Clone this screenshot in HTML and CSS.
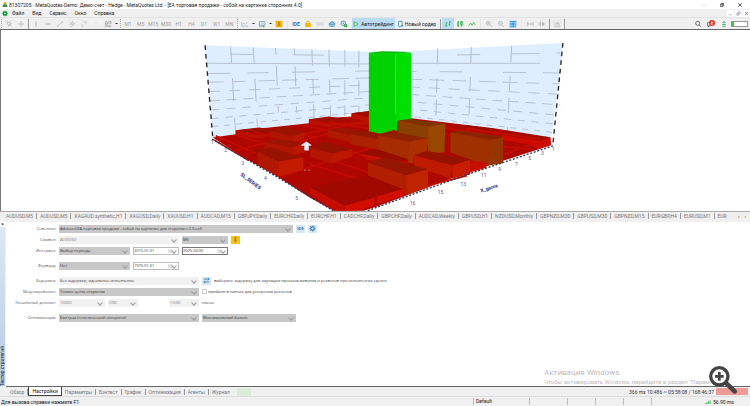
FILE: index.html
```html
<!DOCTYPE html>
<html lang="ru">
<head>
  <meta charset="UTF-8">
  <meta name="viewport" content="width=device-width, initial-scale=1.0">
  <title>MetaTrader</title>
  <link rel="stylesheet" href="styles.css">
</head>
<body>
  <div class="title_bar">
    <svg class="logo" viewBox="0 0 14 14"><circle cx="7" cy="4" r="3.5" fill="#e0b030"/><path d="M1 13c0-5 3-7 6-7s6 2 6 7z" fill="#3f8f4a"/><path d="M7 7l5 5H7z" fill="#3a7ac0"/></svg>
    <span class="title">81307205 - MetaQuotes-Demo: Демо-счет - Hedge - MetaQuotes Ltd. - [ЕА торговая продажи - собой на картинке сторонних 4.0]</span>
    <div class="window_btns">
      <button aria-label="Свернуть"><svg viewBox="0 0 12 12"><path d="M1 6h10" stroke="#aaa"/></svg></button>
      <button aria-label="Развернуть"><svg viewBox="0 0 12 12"><path d="M1 4h7v7H1zM4 3V1h7v7H9" fill="none" stroke="#111" stroke-width="2"/></svg></button>
      <button aria-label="Закрыть"><svg viewBox="0 0 12 12"><path d="M1 1l10 10M11 1L1 11" stroke="#111" stroke-width="2"/></svg></button>
    </div>
  </div>

  <nav class="menu">
    <svg class="logo" viewBox="0 0 18 18"><path d="M9 0l2 3 4-1 0 4 3 3-3 3 0 4-4-1-2 3-2-3-4 1 0-4-3-3 3-3 0-4 4 1z" fill="#0b9a3a"/><circle cx="9" cy="9" r="2.5" fill="#fff"/></svg>
    <a href="#">Файл</a>
    <a href="#">Вид</a>
    <a href="#">Сервис</a>
    <a href="#">Окно</a>
    <a href="#">Справка</a>
    <div class="child_btns">
      <button aria-label="Свернуть окно"><svg viewBox="0 0 12 12"><path d="M3 9h6" stroke="#667"/></svg></button>
      <button aria-label="Восстановить окно"><svg viewBox="0 0 12 12"><path d="M2 5h5v5H2zM5 4V2h5v5H8" fill="none" stroke="#557"/></svg></button>
      <button aria-label="Закрыть окно"><svg viewBox="0 0 12 12"><path d="M3 3l6 6M9 3L3 9" stroke="#557" stroke-width="2"/></svg></button>
    </div>
  </nav>

  <div class="toolbar">
    <i class="grip"></i>
    <button aria-label="Курсор"><svg viewBox="0 0 24 24"><path d="M5 4l6 15 2-6 6-2zM13 12l6 7M15 4h4" fill="none" stroke="#aaa" stroke-width="2"/></svg></button>
    <button aria-label="Перекрестие"><svg viewBox="0 0 24 24"><path d="M12 3v18M3 12h18" stroke="#aaa" stroke-width="2"/></svg></button>
    <i class="sep"></i>
    <button aria-label="Вертикальная линия"><svg viewBox="0 0 24 24"><path d="M12 3v18M9 12h6" stroke="#aaa" stroke-width="2"/></svg></button>
    <button aria-label="Горизонтальная линия"><svg viewBox="0 0 24 24"><path d="M3 12h18M12 9v6" stroke="#aaa" stroke-width="2"/></svg></button>
    <button aria-label="Трендовая линия"><svg viewBox="0 0 24 24"><path d="M4 20L20 4M3 18h4M17 6h4" stroke="#aaa" stroke-width="2"/></svg></button>
    <button aria-label="Канал"><svg viewBox="0 0 24 24"><path d="M3 16L16 3M9 21L21 8M7 10l9 7M11 7l8 6" stroke="#aaa" stroke-width="2"/></svg></button>
    <button aria-label="Фибоначчи"><svg viewBox="0 0 24 24"><path d="M10 6h10M4 18h8M4 12l3 4M18 6v5" stroke="#b8b8b8" stroke-width="2"/></svg></button>
    <button aria-label="Текст"><svg viewBox="0 0 24 24"><path d="M8 7h8M12 7v10" stroke="#e0e0e0" stroke-width="2"/></svg></button>
    <button aria-label="Объекты"><svg viewBox="0 0 24 24"><path d="M3 11l4-8 4 8zM14 4h7v6h-7zM4 14h6v6H4zM14 20l3-6 4 6z" fill="none" stroke="#999" stroke-width="2"/></svg></button>
    <i class="drop"></i>
    <i class="grip"></i>
    <div class="periods">
      <button>M1</button><button>M5</button><button>M15</button><button>M30</button><button>H1</button><button>H4</button><button>D1</button><button>W1</button><button>MN</button>
    </div>
    <i class="grip"></i>
    <button aria-label="Тип графика"><svg viewBox="0 0 24 24"><path d="M2 6v13h20M3 14l5-5 5 4 7-5" fill="none" stroke="#9db3c4" stroke-width="2"/></svg></button>
    <i class="drop"></i>
    <button aria-label="Шаблоны"><svg viewBox="0 0 24 24"><path d="M4 5h17v10H4zM4 15v4h10M8 9h9" fill="#fff" stroke="#5a88a8" stroke-width="2"/><path d="M17 16v6M14 19h6" stroke="#1cab3c" stroke-width="2"/></svg></button>
    <i class="drop"></i>
    <button aria-label="Символ"><svg viewBox="0 0 24 24"><rect x="2" y="2" width="20" height="20" rx="2" fill="#f2b705"/><path d="M15 8c-5-3-8 3-3 4s2 7-4 4M12 5v14" fill="none" stroke="#a87400" stroke-width="2"/></svg></button>
    <i class="sep light"></i>
    <button class="ide">IDE</button>
    <button aria-label="Маркет"><svg viewBox="0 0 24 24"><path d="M8 9V6c0-4 8-4 8 0v3" fill="none" stroke="#d9a000" stroke-width="2"/><path d="M4 9h16l1 12H3z" fill="#f5b800"/></svg></button>
    <button aria-label="Сигналы"><svg viewBox="0 0 24 24"><path d="M5 6l14 12M19 6L5 18M3 8v8M21 8v8" stroke="#bbb" stroke-width="2"/></svg></button>
    <button aria-label="Облако"><svg viewBox="0 0 24 24"><path d="M5 15c-4-1-2-6 2-5 1-7 10-6 10-1 5 0 5 6 1 6zM4 19h16" fill="#8cc6ec" stroke="#1676b4" stroke-width="2"/></svg></button>
    <button aria-label="VPS"><svg viewBox="0 0 24 24"><circle cx="10" cy="10" r="7" fill="none" stroke="#3b85b5" stroke-width="2"/><path d="M3 10h14M10 3v14M6 4l9 12" stroke="#3b85b5"/><circle cx="17" cy="17" r="5" fill="#19a83b"/><path d="M15 17h4M17 15v4" stroke="#fff"/></svg></button>
    <div class="trade_btns">
      <button class="checked"><svg viewBox="0 0 18 18"><path d="M3 3l10 6-10 6z" fill="#fff" stroke="#10a934" stroke-width="2"/></svg>Автотрейдинг</button>
      <button><svg viewBox="0 0 18 18"><path d="M4 2h9v8M4 2v12c0 3 5 3 8 0" fill="#fff" stroke="#2c7cba" stroke-width="2"/><path d="M13 10v6M10 13h6" stroke="#1676b4" stroke-width="2"/></svg>Новый ордер</button>
    </div>
    <i class="sep"></i>
    <button class="checked" aria-label="Бары"><svg viewBox="0 0 24 24"><path d="M7 6v15M3 17h4M7 9h3M17 3v14M13 13h4M17 6h4" stroke="#18ab42" stroke-width="2"/></svg></button>
    <button aria-label="Свечи"><svg viewBox="0 0 24 24"><path d="M8 3v18M5 6h5M5 6v12h5M17 3v18M14 5h6v10h-6z" fill="none" stroke="#18ab42" stroke-width="2"/></svg></button>
    <button aria-label="Линия"><svg viewBox="0 0 24 24"><path d="M2 17l6-8 4 7 5-9 5 8" fill="none" stroke="#18ab42" stroke-width="2"/></svg></button>
    <i class="sep light"></i>
    <button aria-label="Приблизить"><svg viewBox="0 0 24 24"><circle cx="10" cy="10" r="6" fill="none" stroke="#aaa" stroke-width="2"/><path d="M15 15l6 6M7 10h6M10 7v6" stroke="#aaa" stroke-width="2"/></svg></button>
    <button aria-label="Отдалить"><svg viewBox="0 0 24 24"><circle cx="10" cy="10" r="6" fill="none" stroke="#aaa" stroke-width="2"/><path d="M15 15l6 6M7 10h6" stroke="#aaa" stroke-width="2"/></svg></button>
    <button aria-label="Плитка"><svg viewBox="0 0 24 24"><rect x="2" y="3" width="20" height="18" fill="#8bc8f0"/><path d="M2 4h20M2 12h20M12 4v17M2 21h20" stroke="#2483c4" stroke-width="2"/></svg></button>
    <i class="sep light"></i>
    <button aria-label="Сдвиг"><svg viewBox="0 0 24 24"><path d="M4 5v14M8 8v8M13 12h6M16 9l-3 3 3 3M21 5v14" fill="none" stroke="#aaa" stroke-width="2"/></svg></button>
    <button aria-label="Автопрокрутка"><svg viewBox="0 0 24 24"><path d="M4 8v8M8 5v14M13 8h3v8h-3zM16 12h6" fill="#aaa" stroke="#aaa" stroke-width="2"/></svg></button>
    <i class="sep"></i>
    <button aria-label="Снимок"><svg viewBox="0 0 24 24"><path d="M3 3h19v18H3z" fill="none" stroke="#aaa" stroke-dasharray="3 2"/><path d="M6 11h13v9H6zM10 11V8h6v3" fill="none" stroke="#bbb" stroke-width="2"/><circle cx="13" cy="15" r="2" fill="#bbb"/></svg></button>
    <i class="sep"></i>
    <div class="tool_right">
      <button aria-label="Поиск"><svg viewBox="0 0 24 24"><circle cx="11" cy="10" r="6" fill="none" stroke="#333" stroke-width="2"/><path d="M16 15l4 5" stroke="#333" stroke-width="2"/></svg></button>
      <button aria-label="Уведомления"><svg viewBox="0 0 24 24"><path d="M2 8h10v9H7l-3 4v-4H2z" fill="#fff" stroke="#333" stroke-width="2"/><circle cx="15" cy="9" r="9" fill="#e2301e"/><path d="M12 6h5v3h-5v4h6" fill="none" stroke="#fff" stroke-width="2"/></svg></button>
      <button aria-label="Соединение"><svg viewBox="0 0 24 24"><path d="M7 9l5-5 5 5M12 5v6M6 14h12M9 16l3-3 3 3M7 20h10" fill="none" stroke="#18ab42" stroke-width="2"/></svg></button>
      <div class="level"><i></i></div>
    </div>
  </div>

  <!-- 3D график -->
  <div class="chart">
    <svg viewBox="0 90 2250 543" role="img" aria-label="3D график оптимизации">
      <!-- стены -->
      <path d="M613 136L1110 155 1232 153 1688 129 1653 420 1232 360 1053 340 945 372 637 413z" fill="#dfeeff"/>
      <g fill="none" stroke="#b9c2cd" stroke-width="3">
        <path d="M618 190L1105 192 1232 190 1620 190"/>
        <path d="M620 162L1105 167 1232 168 1680 159" stroke-dasharray="0 68 70 120 92 400 70 92 86 50 80"/>
        <path d="M620 221L1105 213 1680 219" stroke-dasharray="70 50 64 70 70 120"/>
        <path d="M623 247L1105 234 1680 252" stroke-dasharray="46 25 40 40 50 20"/>
        <path d="M625 275L1105 255 1680 283" stroke-dasharray="34 26"/>
        <path d="M628 303L1105 275 1680 315" stroke-dasharray="30 20"/>
        <path d="M630 330L1105 294 1675 346" stroke-dasharray="26 22"/>
        <path d="M632 356L1105 315 1670 373" stroke-dasharray="22 20"/>
        <path d="M635 380L1105 335 1660 398" stroke-dasharray="18 18"/>
      </g>
      <g fill="none" stroke="#b4bdc8" stroke-width="3">
        <path d="M690 140L704 390M758 142L770 380" stroke-dasharray="50 44 70 50"/>
        <path d="M825 144L835 376M881 145L890 372" stroke-dasharray="20 34 60 60"/>
        <path d="M934 147L941 364M985 149L990 358M1033 150v200M1075 152v190" stroke-dasharray="50 40 46 30"/>
        <path d="M1312 145L1306 368M1413 141L1405 380M1534 138L1521 396" stroke-dasharray="48 42 44 20"/>
      </g>
      <path d="M613 136L636 413M1688 129L1658 432" fill="none" stroke="#222" stroke-width="4" stroke-dasharray="14 12"/>

      <!-- пол -->
      <path d="M636 413L705 403 705 391 800 384 925 370 925 358 1053 350 1053 340 1110 333 1232 355 1480 385 1650 412 1652 436 1395 520 1130 620 1090 633 1000 633 930 595 830 530 750 485z" fill="#ae0700"/>
      <g fill="#9d0d00">
        <path d="M705 391l70-8 60 9-60 14zM925 358l60-8 60 9-60 12zM1053 340l55-7 60 9-50 9z"/>
        <path d="M1232 358l90 12-30 10-70-10zM1400 376l90 12-20 8-90-10zM1520 396l128 16-26 10-120-17z"/>
        <path d="M750 452l60-14 80 30-70 20z"/>
      </g>
      <g fill="none" stroke="#c40b00" stroke-width="5">
        <path d="M640 420l105 62M645 408l120 52M705 405l110 32M760 396l100 26M830 390l120 24M905 376l180 34M985 366l120 20"/>
        <path d="M705 452l140-36 240-48M770 462l230-66M840 530l120-38 230-72M925 492l170 52M985 480l140 44M1040 452l170 48M1110 400l180 70"/>
        <path d="M1240 386l130 24M1310 380l190 30M1395 385l190 28M1470 396l150 22M1390 500l120-36 110-40M1490 440l110 8M1350 405l70-20M1270 560l130-32"/>
      </g>
      <path d="M705 391l70 14 55-10v8l-55 14-70-12zM925 358l60 12 120-6v9l-120 8-60-8zM1053 340l60 14v14l-60-12z" fill="#bb0f00"/>
      <path d="M1502 405l120 18 28-11 2 22-40 14-20-14-90-14z" fill="#cf0b00"/>

      <!-- задние столбцы -->
      <path d="M810 393l37-13 65 18-39 12z" fill="#9b1400"/>
      <path d="M810 393l63 17v18l-63-16z" fill="#b01500"/><path d="M873 410l39-12v22l-39 8z" fill="#b81700"/>
      <path d="M792 427l38-10 80 13-35 13z" fill="#9b1400"/>
      <path d="M792 427l83 16v24l-83-18z" fill="#b01500"/><path d="M875 443l35-13v28l-35 9z" fill="#b81700"/>
      <path d="M980 390l50-8 60 14-45 12z" fill="#9b1400"/>
      <path d="M980 390l70 16v22l-70-18z" fill="#b01800"/>
      <path d="M1050 403l40-10 60 14-17 11z" fill="#8f1a00"/>
      <path d="M1050 403l83 15v32l-83-17z" fill="#ac2200"/>

      <!-- зелёный столбец -->
      <path d="M1105 158l40-4 87 2-47 6z" fill="#00b800"/>
      <path d="M1105 158l80 2v230l-45 12-35-8z" fill="#00d200"/>
      <path d="M1185 158h47v202l-42 6v26l-5 2z" fill="#00e000"/>

      <!-- столбцы правой стороны -->
      <path d="M1192 362l33-5 108 15-50 8z" fill="#7c3500"/>
      <path d="M1192 362l91 18v60l-91-36z" fill="#8a4000"/><path d="M1283 380l52-9-3 86-49 5z" fill="#974700"/>
      <path d="M1350 398l25-6 133 18-38 10z" fill="#862500"/>
      <path d="M1350 398l120 22-10 77-110-39z" fill="#a03000"/><path d="M1470 420l38-8v78l-48 8z" fill="#973500"/>
      <path d="M1133 406l47-10 100 19-52 11z" fill="#8c2200"/>
      <path d="M1133 406l95 20v57l-95-35z" fill="#a52b00"/><path d="M1228 426l52-11v43l-40 8-2 24-16-2z" fill="#ab3000"/>

      <!-- передние столбцы -->
      <path d="M1072 460l50-12 105 30-60 6z" fill="#960d00"/><path d="M1072 460l150 28v10l-120-18z" fill="#c21000"/>
      <path d="M930 443l40-17 85 22-62 13z" fill="#951200"/>
      <path d="M930 443l63 18v30l-63-20z" fill="#b41500"/><path d="M993 461l62-13v22l-62 21z" fill="#bd1700"/>
      <path d="M1240 466l40-13 130 25-54 18z" fill="#951100"/>
      <path d="M1240 466l116 30-6 40-110-38z" fill="#bd1a00"/><path d="M1356 496l54-16v43l-54 13z" fill="#c61d00"/>
      <path d="M1410 484l48 2v18l-48 14z" fill="#c80e00"/>
      <path d="M772 455l38-13 98 31-75 12z" fill="#971200"/>
      <path d="M772 455l61 30v45l-61-35z" fill="#b21700"/><path d="M833 485l75-12v37l-75 20z" fill="#c41b00"/>
      <path d="M1102 488l53-15 128 35-66 18z" fill="#951500"/>
      <path d="M1102 488l115 38v60l-115-53z" fill="#b21f00"/><path d="M1217 526l66-18v55l-66 23z" fill="#bf2300"/>
      <path d="M928 563l172-37 108 42-78 22-98 28z" fill="#a00900"/>
      <path d="M928 563l104 55v15h-30l-74-50z" fill="#c50c00"/><path d="M1032 618l91-25v25l-60 15h-31zM1130 590l78-22v20l-78 25z" fill="#d20e00"/>
      <path d="M902 436l16-10 14 10-8 2v13h-12v-13zM910 511h5M923 511h5" fill="#e6eefc" stroke="#cfd9ea" stroke-width="2"/>

      <!-- оси -->
      <path d="M634 418L830 532 998 633M1658 438L1395 526 1100 633" fill="none" stroke="#335" stroke-width="4" stroke-dasharray="6 5"/>
      <g class="axis_text">
        <text x="630" y="432">1</text><text x="671" y="458">2</text><text x="722" y="495">3</text><text x="790" y="540">4</text><text x="884" y="600">5</text>
        <text x="1655" y="455">1</text><text x="1622" y="466">3</text><text x="1584" y="482">5</text><text x="1544" y="498">7</text><text x="1494" y="515">9</text><text x="1442" y="533">11</text><text x="1380" y="560">13</text><text x="1312" y="584">15</text><text x="1228" y="616">16</text>
        <text class="axis_name" transform="translate(718 526) rotate(37)">SL_SERIES</text>
        <text class="axis_name" transform="translate(1442 578) rotate(-18)">X_gama</text>
      </g>
    </svg>
  </div>

  <nav class="chart_tabs">
    <div class="tab_list">
      <a href="#">AUDUSD,M5</a><a href="#">AUDUSD,M5</a><a href="#">XAGAUD.synthetic,H1</a><a href="#">XAGUSD,Daily</a><a href="#">XAUUSD,H1</a><a href="#">AUDCAD,M15</a><a href="#">GBPJPY,Daily</a><a href="#">EURCHF,Daily</a><a href="#">EURCHF,H1</a><a href="#">CADCHF,Daily</a><a href="#">GBPCHF,Daily</a><a href="#">AUDCAD,Weekly</a><a href="#">GBPUSD,H1</a><a href="#">NZDUSD,Monthly</a><a href="#">GBPNZD,M30</a><a href="#">GBPUSD,M30</a><a href="#">GBPNZD,M15</a><a href="#">EURGBP,H4</a><a href="#">EURUSD,M1</a><a href="#">EUR</a>
    </div>
    <div class="scroll_btns"><button aria-label="Назад">‹</button><button aria-label="Вперёд">›</button></div>
  </nav>

  <!-- Тестер стратегий -->
  <div class="tester">
    <div class="side">
      <button aria-label="Закрыть тестер">×</button>
      <span>Тестер стратегий</span>
    </div>
    <form class="settings">
      <label for="expert">Советник:</label>
      <div class="row">
        <span class="select w_expert"><select id="expert"><option>Advisors\ЕА торговля продажи - собой на картинке для стороны v 2.0.ex5</option></select></span>
        <button type="button" class="small_btn ide">IDE</button>
        <button type="button" class="small_btn" aria-label="Параметры советника"><svg viewBox="0 0 24 24"><circle cx="12" cy="12" r="6" fill="none" stroke="#2b7db5" stroke-width="4"/><path d="M12 2v4M12 18v4M2 12h4M18 12h4M5 5l3 3M16 16l3 3M19 5l-3 3M8 16l-3 3" stroke="#2b7db5" stroke-width="3"/></svg></button>
      </div>

      <label for="symbol">Символ:</label>
      <div class="row">
        <span class="select light w_symbol"><select id="symbol"><option>AUDUSD</option></select></span>
        <span class="select w_date"><select aria-label="Период"><option>M5</option></select></span>
        <button type="button" class="small_btn gold" aria-label="Спецификация"><svg viewBox="0 0 24 24"><path d="M16 7c-6-4-10 3-4 5s2 8-5 4M12 3v18" fill="none" stroke="#8a6200" stroke-width="2"/></svg></button>
      </div>

      <label for="interval">Интервал:</label>
      <div class="row">
        <span class="select w_interval"><select id="interval"><option>Выбор периода</option></select></span>
        <span class="date w_date"><input type="text" value="2015.01.01" aria-label="Дата начала"><svg viewBox="0 0 15 12"><path d="M1 2h12v9H1zM1 5h12M5 5v6M9 5v6" fill="none" stroke="#aaa"/></svg></span>
        <span class="date active w_date"><input type="text" value="2025.04.05" aria-label="Дата конца"><svg viewBox="0 0 15 12"><path d="M1 2h12v9H1zM1 5h12M5 5v6M9 5v6" fill="none" stroke="#aaa"/></svg></span>
      </div>

      <label class="group" for="forward">Форвард:</label>
      <div class="row group">
        <span class="select w_interval"><select id="forward"><option>Нет</option></select></span>
        <span class="date w_date"><input type="text" value="1970.01.01" aria-label="Дата форварда"><svg viewBox="0 0 15 12"><path d="M1 2h12v9H1zM1 5h12M5 5v6M9 5v6" fill="none" stroke="#aaa"/></svg></span>
      </div>

      <label class="group" for="delay">Задержки:</label>
      <div class="row group">
        <span class="select light dark_text w_full"><select id="delay"><option>Без задержки, идеальное исполнение</option></select></span>
        <button type="button" class="small_btn" aria-label="Настройка задержки"><svg viewBox="0 0 24 24"><path d="M3 7h18M17 3l4 4-4 4M21 17H3M7 13l-4 4 4 4" fill="none" stroke="#2b7db5" stroke-width="3"/></svg></button>
        <span class="note">выберите задержку для эмуляции проскальзывания и реквотов при исполнении сделок</span>
      </div>

      <label for="model">Моделирование:</label>
      <div class="row">
        <span class="select w_full"><select id="model"><option>Только цены открытия</option></select></span>
        <label class="check"><input type="checkbox">прибыль в пипсах для ускорения расчетов</label>
      </div>

      <label for="deposit">Начальный депозит:</label>
      <div class="row">
        <span class="select light w_date"><select id="deposit"><option>10000</option></select></span>
        <span class="select light w_short"><select aria-label="Валюта"><option>USD</option></select></span>
        <span class="select light w_short lever"><select id="lever"><option>1:500</option></select></span>
        <label class="note" for="lever">плечо</label>
      </div>

      <label class="group" for="optim">Оптимизация:</label>
      <div class="row group">
        <span class="select w_full"><select id="optim"><option>Быстрая (генетический алгоритм)</option></select></span>
        <span class="select w_crit"><select aria-label="Критерий"><option>Максимальный баланс</option></select></span>
      </div>
    </form>
    <div class="watermark">
      <p class="big">Активация Windows</p>
      <p>Чтобы активировать Windows, перейдите в раздел "Парам</p>
    </div>
  </div>

  <div class="tester_tabs">
    <a href="#">Обзор</a><a href="#" class="active">Настройки</a><a href="#">Параметры</a><a href="#">Бэктест</a><a href="#">График</a><a href="#">Оптимизация</a><a href="#">Агенты</a><a href="#">Журнал</a>
    <i class="progress"></i>
    <span class="timer">366 ms 10:486 ~ 05:58:08 / 168:46:37</span>
    <button class="stop" aria-label="Стоп"></button>
    <svg class="zoom" viewBox="0 0 90 90"><circle cx="34" cy="34" r="26" fill="#fff" stroke="#444" stroke-width="10"/><path d="M34 21v26M21 34h26" stroke="#444" stroke-width="8"/><path d="M56 56l24 23" stroke="#444" stroke-width="14" stroke-linecap="round"/></svg>
  </div>

  <div class="status">
    <span class="help">Для вызова справки нажмите F1</span>
    <span class="cell profile">Default</span>
    <span class="cell wide"></span>
    <span class="cell"></span>
    <span class="cell"></span>
    <span class="cell"></span>
    <span class="cell last"></span>
    <span class="ping"><svg viewBox="0 0 18 12"><path d="M2 12V9M6 12V7M10 12V4M15 12V1" stroke="#2db84d" stroke-width="3"/></svg>56.90 ms</span>
  </div>
</body>
</html>
```
FILE: styles.css
```css
* {
  margin: 0;
  padding: 0;
  box-sizing: border-box;
}
body {
  display: flex;
  flex-direction: column;
  min-height: 100vh;
  background-color: #f0f0f0;
  font-family: Roboto, "Liberation Sans", sans-serif;
  font-size: 5px;
  line-height: 8px;
  color: #222;
}
a {
  color: inherit;
  text-decoration: none;
}
button, input, select {
  font: inherit;
  color: inherit;
  border: none;
  background: none;
  border-radius: 0;
}
svg {
  display: block;
}

/* заголовок и меню */
.title_bar {
  display: flex;
  align-items: center;
  height: 9px;
  padding-left: 2px;
  background-color: #fff;
  white-space: nowrap;
}
.logo {
  width: 6px;
  height: 7px;
  flex: none;
}
.title {
  flex: 1;
  padding-left: 1px;
}
.window_btns {
  display: flex;
  gap: 14px;
  padding-right: 8px;
}
.window_btns svg {
  width: 4px;
  height: 4px;
}
.menu {
  display: flex;
  align-items: center;
  gap: 8px;
  height: 8px;
  padding-left: 2px;
}
.menu .logo {
  margin-right: -4px;
}
.child_btns {
  display: flex;
  gap: 1px;
  margin-left: auto;
}
.child_btns button {
  padding: 1px;
  background-color: #fff;
}
.child_btns svg {
  width: 5px;
  height: 5px;
}

/* панель инструментов */
.toolbar {
  display: flex;
  align-items: center;
  height: 13px;
  border-top: 1px solid #e2e2e2;
  border-bottom: 1px solid #666;
}
.toolbar button {
  display: flex;
  flex: none;
  align-items: center;
  justify-content: center;
  width: 12px;
  height: 11px;
}
.toolbar svg {
  width: 8px;
  height: 8px;
}
.grip {
  width: 1px;
  height: 9px;
  margin: 0 1px;
  border-left: 1px dotted #aaa;
}
.sep {
  width: 1px;
  height: 10px;
  margin: 0 1px;
  background-color: #999;
}
.sep.light {
  margin: 0 2px;
  background-color: #e4e4e4;
}
.drop {
  width: 3px;
  margin: 0 1px;
  border: 1px solid transparent;
  border-top-color: #333;
}
.periods {
  display: grid;
  grid-template-columns: repeat(9, 1fr);
  width: 114px;
  color: #999;
}
.ide {
  font-weight: bold;
  color: #2b7db5;
}
.trade_btns {
  display: flex;
  margin: 0 1px 0 2px;
}
.toolbar .trade_btns button {
  gap: 1px;
  width: 43px;
  white-space: nowrap;
}
.toolbar .checked {
  background-color: #bcdcf4;
}
.toolbar .trade_btns svg {
  width: 7px;
  flex: none;
}
.tool_right {
  display: flex;
  align-items: center;
  gap: 1px;
  margin-left: auto;
  padding-right: 2px;
}
.level {
  width: 17px;
  height: 6px;
  border: 1px solid #999;
  background-color: #fff;
}
.level i {
  display: block;
  width: 2px;
  height: 4px;
  background-color: #2bd02b;
}

/* график */
.chart {
  border-left: 1px solid #777;
  background-color: #fff;
}
.chart svg {
  width: 100%;
}
.axis_text {
  font-size: 15px;
  fill: #55589a;
}
.axis_name {
  font-size: 15px;
  font-weight: bold;
  fill: #2c2f86;
}
.chart_tabs {
  display: flex;
  align-items: center;
  height: 10px;
  padding-left: 3px;
  border-top: 1px solid #aaa;
  white-space: nowrap;
  color: #777;
}
.tab_list {
  display: flex;
}
.tab_list a {
  padding: 0 3px;
  line-height: 6px;
  border-right: 1px solid #999;
}
.tab_list a:last-child {
  padding-right: 0;
  border: none;
}
.scroll_btns {
  display: flex;
  gap: 5px;
  margin-left: auto;
  padding-right: 4px;
  color: #222;
}

/* тестер */
.tester {
  position: relative;
  display: flex;
  flex: 1;
  border-top: 1px solid #f0f0f0;
  background-color: #fff;
}
.side {
  display: flex;
  flex-direction: column;
  align-items: center;
  justify-content: space-between;
  width: 6px;
  border-right: 1px solid #f0f0f0;
  background: linear-gradient(#dfe9f4, #b4cbe2);
}
.side button {
  width: 6px;
  line-height: 5px;
  background-color: #fff;
}
.side span {
  writing-mode: vertical-rl;
  transform: rotate(180deg);
  line-height: 5px;
  white-space: nowrap;
}
.settings {
  display: grid;
  grid-template-columns: 50px 1fr;
  align-content: start;
  gap: 3px;
  flex: 1;
  padding-top: 3px;
  font-family: "Open Sans", "Noto Sans", sans-serif;
  font-size: 4px;
  color: #333;
}
.settings > label {
  text-align: right;
  white-space: nowrap;
  color: #555;
}
.settings .group {
  margin-top: 4px;
}
.row {
  display: flex;
  gap: 3px;
  height: 8px;
  white-space: nowrap;
}
.select {
  position: relative;
  height: 8px;
  background-color: #c8c8c8;
}
.select.light {
  background-color: #f1f1f1;
}
.select select {
  display: block;
  appearance: none;
  width: 100%;
  height: 8px;
  padding-left: 1px;
  line-height: 8px;
}
.light select {
  color: #777;
}
.dark_text select {
  color: #333;
}
.select::after, .date::after {
  content: "";
  position: absolute;
  top: 2px;
  right: 3px;
  width: 3px;
  height: 3px;
  border: solid #999;
  border-width: 0 1px 1px 0;
  transform: rotate(45deg);
}
.date::after {
  top: 1px;
  right: 2px;
}
.date {
  position: relative;
  display: flex;
  align-items: center;
  height: 8px;
  border: 1px solid #bbb;
  background-color: #fff;
}
.date.active {
  border-color: #777;
}
.date input {
  width: 34px;
  height: 6px;
  line-height: 6px;
}
.date svg {
  width: 5px;
  height: 4px;
}
.w_expert {
  width: 234px;
}
.w_symbol {
  width: 120px;
}
.w_date {
  width: 46px;
}
.w_interval {
  width: 71px;
}
.w_full {
  width: 140px;
}
.w_short {
  width: 30px;
}
.w_crit {
  width: 94px;
}
.lever {
  margin-left: 28px;
}
.small_btn {
  display: flex;
  align-items: center;
  justify-content: center;
  width: 9px;
  height: 8px;
  background-color: #dce6ee;
}
.small_btn.gold {
  background-color: #f5c21a;
}
.small_btn svg {
  width: 7px;
  height: 7px;
}
.check {
  display: flex;
  align-items: center;
  gap: 1px;
}
.check input {
  appearance: none;
  width: 5px;
  height: 5px;
  border: 1px solid #ccc;
}
.watermark {
  position: absolute;
  right: 40px;
  bottom: 0;
  width: 166px;
  font-size: 6px;
  line-height: 8px;
  white-space: nowrap;
  color: #bbb;
}
.watermark .big {
  font-size: 8px;
  line-height: 10px;
}

/* вкладки тестера */
.tester_tabs {
  position: relative;
  display: flex;
  align-items: center;
  height: 10px;
  padding-left: 1px;
  margin-left: 6px;
  border-top: 1px solid #666;
  white-space: nowrap;
  color: #777;
}
.tester_tabs a {
  padding: 0 3px;
  line-height: 6px;
  border-right: 1px solid #999;
}
.tester_tabs a:nth-of-type(8) {
  border: none;
}
.tester_tabs .active {
  border: 1px solid #444;
  border-top: none;
  background-color: #fff;
  line-height: 8px;
  color: #111;
}
.progress {
  width: 14px;
  height: 8px;
  margin-left: 4px;
  background-color: #dcecd6;
}
.timer {
  margin-left: auto;
  color: #333;
}
.stop {
  width: 32px;
  height: 7px;
  margin: 0 2px;
  background-color: #f09a98;
}
.zoom {
  position: absolute;
  right: 12px;
  bottom: 1px;
  width: 30px;
  height: 30px;
}

/* строка состояния */
.status {
  display: flex;
  align-items: center;
  height: 10px;
  padding-left: 1px;
  border-top: 1px solid #ddd;
  white-space: nowrap;
  color: #111;
}
.help {
  flex: 1;
}
.cell {
  width: 28px;
  height: 7px;
  border-left: 1px solid #bbb;
}
.profile {
  width: 56px;
  padding-left: 2px;
  line-height: 7px;
}
.wide {
  width: 38px;
}
.ping {
  display: flex;
  align-items: center;
  gap: 2px;
  width: 45px;
}
.cell.last {
  width: 54px;
}
.ping svg {
  width: 6px;
  height: 4px;
}
```
